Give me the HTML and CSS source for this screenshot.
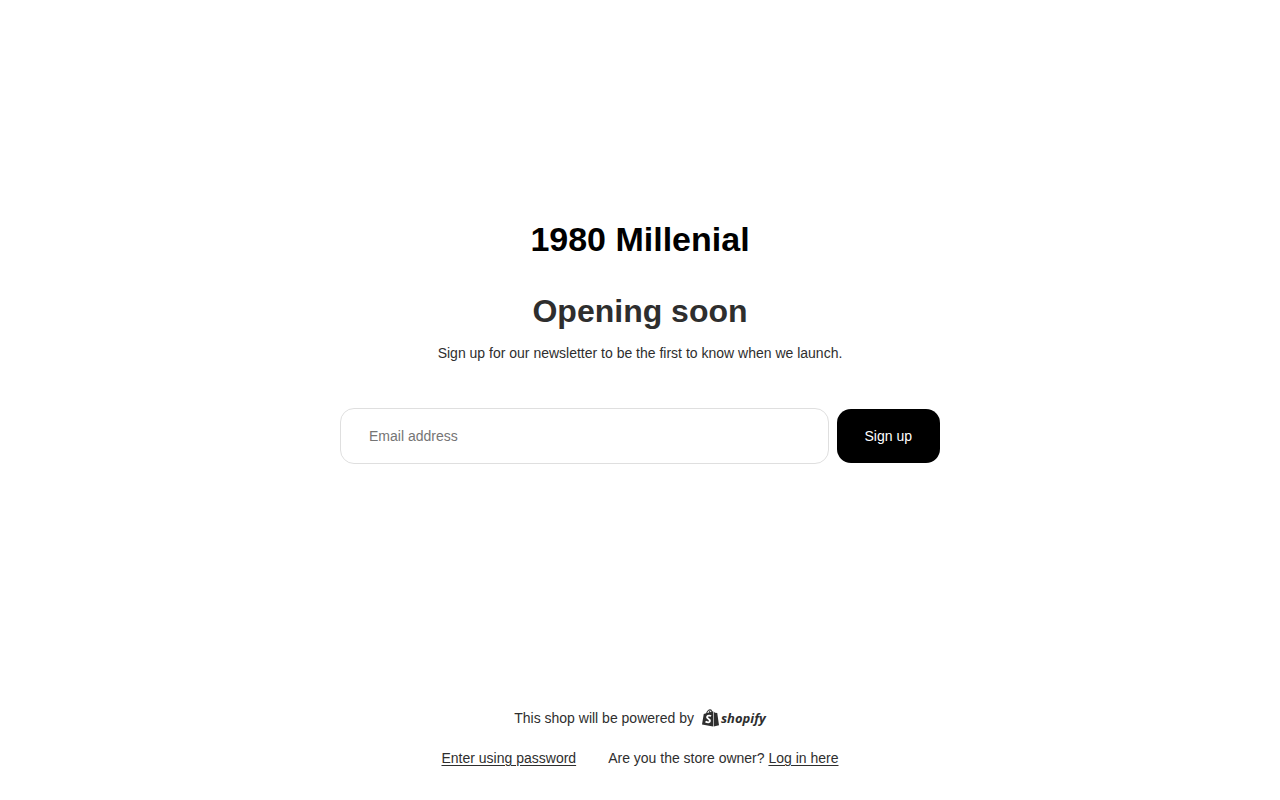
FILE: index.html
```
<!DOCTYPE html>
<html lang="en">
<head>
    <meta charset="UTF-8">
    <meta name="viewport" content="width=device-width, initial-scale=1.0">
    <title>1980 Millenial</title>
    <link rel="stylesheet" href="styles.css">
</head>
<body>
    <main class="content">
        <h1 class="shop-name">1980 Millenial</h1>
        <h2 class="heading">Opening soon</h2>
        <p class="message">Sign up for our newsletter to be the first to know when we launch.</p>
        <form class="signup">
            <input type="email" class="signup-input" placeholder="Email address" aria-label="Email address">
            <button type="submit" class="signup-button">Sign up</button>
        </form>
    </main>

    <footer class="footer">
        <div class="powered">
            <span>This shop will be powered by</span>
            <a href="#" class="shopify">
                <svg class="bag" viewBox="2 0 29 36" preserveAspectRatio="none" aria-hidden="true">
                    <path fill="#2e2e2e" d="M21 35 L2 31 L5 10 L9 8.500 C10 4 13 .5 16 .5 C18 .5 19 2 19.500 4.500 L21 5 Z M11 8 L14 7 C14 5 14.600 3.500 15.500 2.500 C13.500 3 11.800 5 11 8 Z M15.500 6.500 L18 5.500 C18 4 17.500 3 17 2.500 C16 3.500 15.600 5 15.500 6.500 Z" fill-rule="evenodd"/>
                    <path fill="#2e2e2e" d="M22 5 L24 7.500 L28 8 L31 32.500 L22 35 Z"/>
                    <path fill="none" stroke="#fff" stroke-width="3.5" d="M17.500 14 C13 12 10.500 14 10.800 17 C11.200 20 16 20 15.500 24 C15.200 27.500 11.500 27.500 8 25"/>
                </svg>
                <span>shopify</span>
            </a>
        </div>
        <div class="links">
            <a href="#">Enter using password</a>
            <span>Are you the store owner? <a href="#">Log in here</a></span>
        </div>
    </footer>
</body>
</html>
```

FILE: styles.css
```
* {
    box-sizing: border-box;
}
body {
    margin: 0;
    min-height: 100vh;
    display: flex;
    flex-direction: column;
    font-family: "Liberation Sans", Arial, sans-serif;
    font-size: 14px;
    line-height: 20px;
    color: #2e2e2e;
    background-color: #fff;
}
h1, h2, p {
    margin: 0;
}
a {
    color: inherit;
    text-underline-offset: 2px;
}
.content {
    flex: 1;
    display: flex;
    flex-direction: column;
    align-items: center;
    justify-content: center;
    padding: 20px 20px 46px;
    text-align: center;
}
.shop-name {
    font-size: 34px;
    line-height: 40px;
    color: #000;
}
.heading {
    margin-top: 32px;
    font-size: 32px;
    line-height: 40px;
}
.message {
    margin-top: 12px;
}
.signup {
    display: flex;
    align-items: center;
    gap: 8px;
    width: 100%;
    max-width: 600px;
    margin-top: 45px;
}
.signup-input {
    flex: 1;
    min-width: 0;
    height: 56px;
    padding: 0 28px;
    border: 1px solid #dfdfdf;
    border-radius: 14px;
    font: inherit;
    color: inherit;
    background-color: #fff;
}
.signup-input::placeholder {
    color: #757575;
}
.signup-button {
    height: 54px;
    padding: 0 28px;
    border: 0;
    border-radius: 14px;
    font: inherit;
    color: #fff;
    background-color: #000;
    cursor: pointer;
}
.footer {
    display: flex;
    flex-direction: column;
    align-items: center;
    gap: 20px;
    padding: 0 20px 32px;
}
.powered {
    display: flex;
    align-items: center;
    gap: 8px;
}
.shopify {
    display: flex;
    align-items: center;
    gap: 2px;
    font-family: "Open Sans", sans-serif;
    font-size: 13px;
    font-weight: bold;
    font-style: italic;
    text-decoration: none;
}
.bag {
    width: 17px;
    height: 18px;
}
.links {
    display: flex;
    flex-wrap: wrap;
    justify-content: center;
    gap: 8px 32px;
}
```
